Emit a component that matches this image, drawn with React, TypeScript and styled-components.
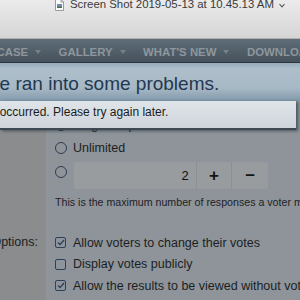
import styled, { createGlobalStyle } from 'styled-components';

const GlobalStyle = createGlobalStyle`
  html, body {
    margin: 0;
    padding: 0;
    overflow: hidden;
    background: #8e949a;
  }
  body {
    font-family: "Liberation Sans", Arial, sans-serif;
  }
`;

const navItems = ['SHOWCASE', 'GALLERY', "WHAT'S NEW", 'DOWNLOADS'];

const Window = styled.div`
  width: 300px;
  height: 300px;
  overflow: hidden;
  display: flex;
  flex-direction: column;
`;

const TitleBar = styled.div`
  height: 38px;
  flex-shrink: 0;
  display: flex;
  align-items: flex-start;
  padding-left: 55px;
  background: linear-gradient(#ebebeb, #d5d5d5);
  border-bottom: 1px solid #b1b1b1;
`;

const Title = styled.div`
  margin-left: 6px;
  margin-top: -1px;
  font-size: 11.4px;
  line-height: 11px;
  color: #3a3a3a;
  white-space: nowrap;
`;

const Chevron = styled.svg`
  margin-left: 5px;
  margin-top: 3px;
`;

const NavBar = styled.div`
  height: 20px;
  flex-shrink: 0;
  padding-top: 3px;
  background: linear-gradient(#5f6d78, #45525c);
  border-bottom: 1px solid #2c363e;
  overflow: hidden;
`;

const NavList = styled.div`
  display: flex;
  margin-left: -39px;
`;

const NavItem = styled.div`
  display: flex;
  align-items: center;
  padding-right: 17.5px;
  font-size: 11.4px;
  font-weight: bold;
  line-height: 20px;
  color: #8e979d;
  white-space: nowrap;
`;

const Caret = styled.span`
  margin-left: 7px;
  width: 0;
  height: 0;
  border-left: 3.5px solid transparent;
  border-right: 3.5px solid transparent;
  border-top: 4px solid #76828b;
`;

const Page = styled.div`
  position: relative;
  flex: 1;
`;

const Overlay = styled.div`
  position: absolute;
  top: 0;
  left: 0;
  right: 0;
  z-index: 2;
`;

const Banner = styled.div`
  height: 34px;
  padding-top: 4px;
  background: linear-gradient(#96aabb, #aebfcb 15%, #a8b9c6 65%, #8399ab);
  font-size: 19px;
  line-height: 34px;
  color: #223850;
  white-space: nowrap;
  overflow: hidden;
`;

const BannerText = styled.div`
  margin-left: -18px;
`;

const Notice = styled.div`
  width: 296px;
  height: 22px;
  padding-bottom: 5px;
  background: linear-gradient(#e0e5ea, #ced4da);
  border-bottom: 2px solid #3e4852;
  box-shadow: 2px 1px 3px rgba(30, 40, 50, 0.6);
  font-size: 12px;
  line-height: 22px;
  color: #1a1d20;
  white-space: nowrap;
  overflow: hidden;
`;

const NoticeText = styled.div`
  margin-left: -47px;
`;

const Form = styled.div`
  height: 100%;
  display: grid;
  grid-template-columns: 46px 1fr;
  grid-auto-rows: min-content;
  align-content: start;
  padding-top: 51px;
  box-sizing: border-box;
  background: linear-gradient(to right, #8b8c8d 46px, #8e949a 46px);
  color: #1b1f23;
`;

const Label = styled.div<{ $rowHeight: number }>`
  display: flex;
  justify-content: flex-end;
  padding-right: 8px;
  font-size: 12.5px;
  line-height: ${(p) => p.$rowHeight}px;
  white-space: nowrap;
`;

const Field = styled.div<{ $gap?: number }>`
  padding-left: 9px;
  margin-top: ${(p) => p.$gap || 0}px;
  display: flex;
  flex-direction: column;
  min-width: 0;
`;

const LabelCell = styled.div<{ $gap?: number }>`
  margin-top: ${(p) => p.$gap || 0}px;
`;

const OptionRow = styled.div<{ $height: number }>`
  height: ${(p) => p.$height}px;
  display: flex;
  align-items: center;
  gap: 6px;
  font-size: 12.5px;
  white-space: nowrap;
`;

const Radio = styled.span`
  width: 12px;
  height: 12px;
  box-sizing: border-box;
  border: 1.5px solid #2b3d51;
  border-radius: 50%;
  flex-shrink: 0;
`;

const StepperRow = styled.div`
  display: flex;
  align-items: flex-start;
  gap: 7px;
  margin-top: 3px;
`;

const StepperRadio = styled(Radio)`
  margin-top: 3.5px;
`;

const Stepper = styled.div`
  width: 194px;
  height: 27px;
  display: flex;
  border-radius: 3px;
  background: #999c9f;
  overflow: hidden;
`;

const StepperValue = styled.div`
  width: 123px;
  box-sizing: border-box;
  padding-right: 7px;
  display: flex;
  align-items: center;
  justify-content: flex-end;
  font-size: 13px;
  color: #111;
`;

const StepperButton = styled.div<{ $width: number }>`
  width: ${(p) => p.$width}px;
  display: flex;
  align-items: center;
  justify-content: center;
  border-left: 1px solid #8d9093;
  font-size: 17px;
  font-weight: bold;
  color: #141414;
`;

const Help = styled.div`
  margin-top: 7px;
  font-size: 10.65px;
  line-height: 13px;
  white-space: nowrap;
  color: #1e2226;
`;

const Checkbox = styled.span`
  width: 11px;
  height: 11px;
  box-sizing: border-box;
  border: 1.5px solid #2d4157;
  border-radius: 2px;
  flex-shrink: 0;
  display: flex;
  align-items: center;
  justify-content: center;
  margin-right: 1px;
`;

const DocIcon = () => (
  <svg width="9" height="12" viewBox="0 0 9 12" style={{ marginTop: -1 }}>
    <path d="M0.5 0.5 H6 L8.5 3 V11.5 H0.5 Z" fill="#fafafa" stroke="#9a9a9a" />
    <path d="M6 0.5 V3 H8.5" fill="none" stroke="#9a9a9a" />
    <rect x="2" y="5" width="5" height="4" fill="#6b8fb8" />
    <rect x="2" y="7.5" width="5" height="1.5" fill="#4f6f4a" />
  </svg>
);

const Check = ({ checked }: { checked?: boolean }) => (
  <Checkbox>
    {checked && (
      <svg width="8" height="7" viewBox="0 0 8 7">
        <path d="M1 3.6 L3.1 5.6 L7 1" fill="none" stroke="#2d4157" strokeWidth="1.4" />
      </svg>
    )}
  </Checkbox>
);

const App = () => {
  return (
    <Window>
      <GlobalStyle />
      <TitleBar>
        <DocIcon />
        <Title>Screen Shot 2019-05-13 at 10.45.13 AM</Title>
        <Chevron width="6" height="5" viewBox="0 0 6 5">
          <path d="M0.5 1 L3 3.8 L5.5 1" fill="none" stroke="#555" strokeWidth="1.1" />
        </Chevron>
      </TitleBar>
      <NavBar>
        <NavList>
          {navItems.map((item) => (
            <NavItem key={item}>
              {item}
              <Caret />
            </NavItem>
          ))}
        </NavList>
      </NavBar>
      <Page>
        <Overlay>
          <Banner>
            <BannerText>We ran into some problems.</BannerText>
          </Banner>
          <Notice>
            <NoticeText>An error occurred. Please try again later.</NoticeText>
          </Notice>
        </Overlay>
        <Form>
          <LabelCell>
            <Label $rowHeight={22.5}>Max. responses:</Label>
          </LabelCell>
          <Field>
            <OptionRow $height={22.5}>
              <Radio />
              Single response
            </OptionRow>
            <OptionRow $height={22.5}>
              <Radio />
              Unlimited
            </OptionRow>
            <StepperRow>
              <StepperRadio />
              <Stepper>
                <StepperValue>2</StepperValue>
                <StepperButton $width={35}>+</StepperButton>
                <StepperButton $width={36}>−</StepperButton>
              </Stepper>
            </StepperRow>
            <Help>This is the maximum number of responses a voter may choose.</Help>
          </Field>
          <LabelCell $gap={23}>
            <Label $rowHeight={21.5}>Options:</Label>
          </LabelCell>
          <Field $gap={23}>
            <OptionRow $height={21.5}>
              <Check checked />
              Allow voters to change their votes
            </OptionRow>
            <OptionRow $height={21.5}>
              <Check />
              Display votes publicly
            </OptionRow>
            <OptionRow $height={21.5}>
              <Check checked />
              Allow the results to be viewed without voting
            </OptionRow>
          </Field>
        </Form>
      </Page>
    </Window>
  );
};

export default App;
